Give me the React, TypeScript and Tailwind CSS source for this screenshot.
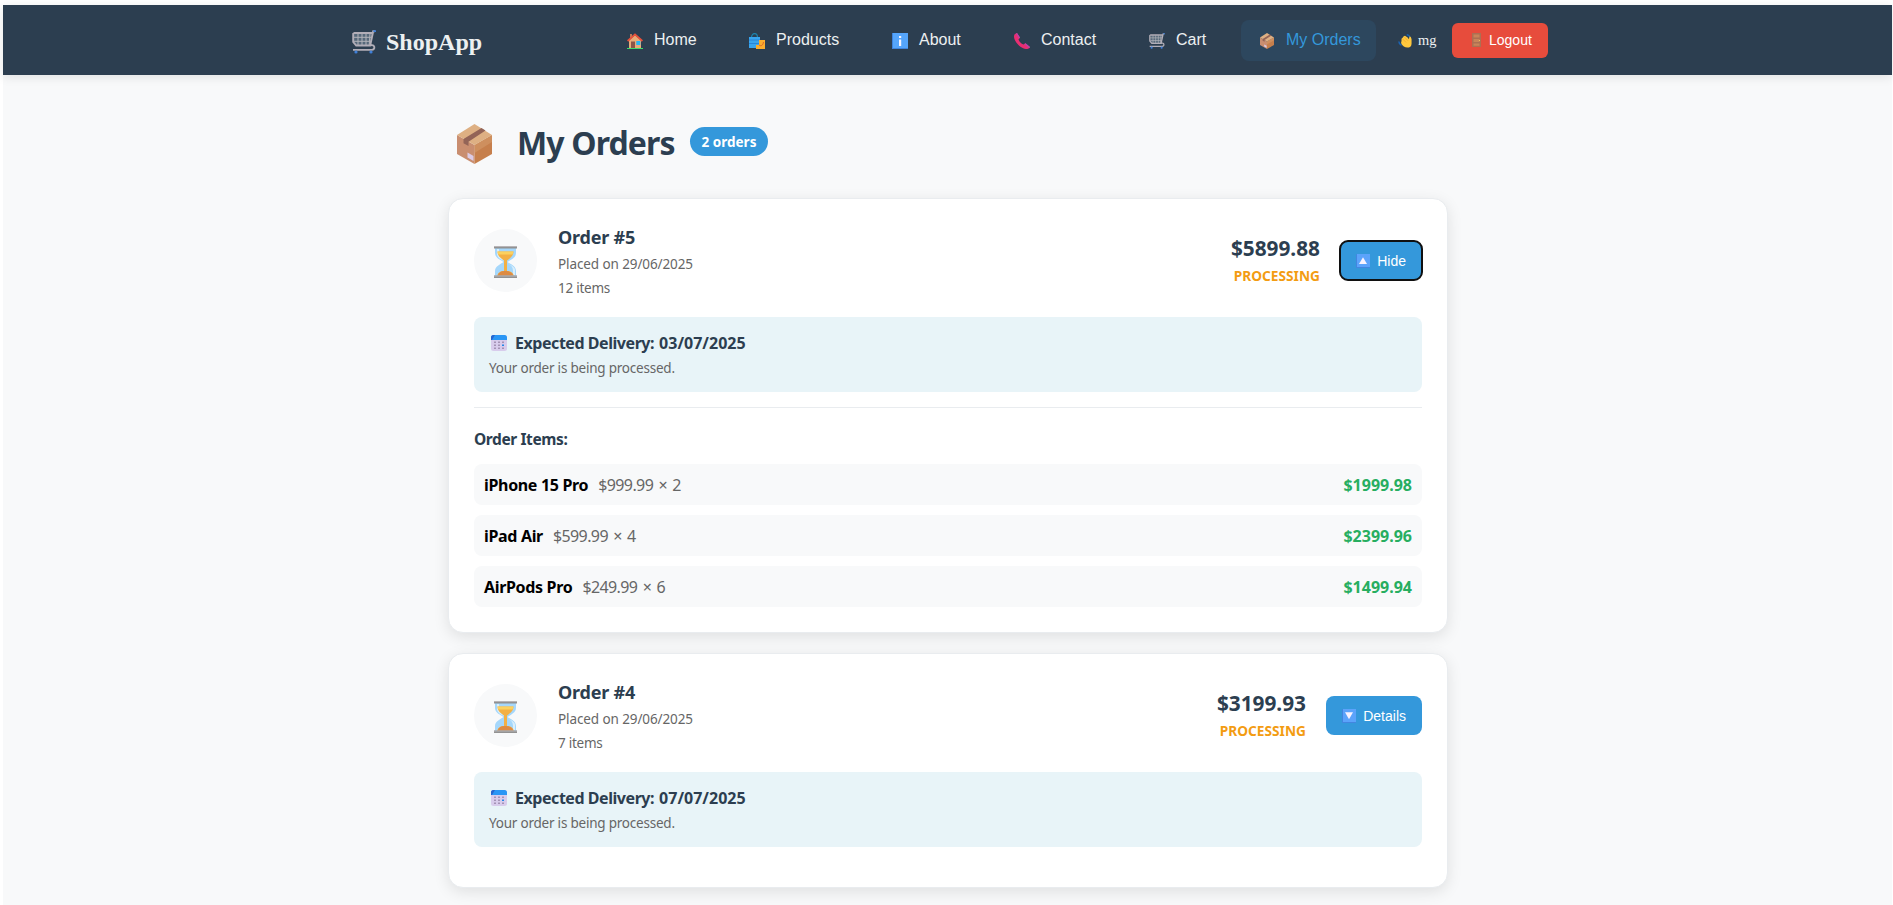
import React from "react";

type IconProps = { className?: string };

const Trolley = ({ className }: IconProps) => (
  <svg viewBox="0 0 24 24" className={className} fill="none">
    <path d="M2 3.5h18.2l-1.6 12H4L1.5 12z" fill="#56687a" />
    <path d="M6 3.5v12M10 3.5v12M14 3.5v12M18 3.5l-.8 12M1.5 7.3h18M2 11.3h17" stroke="#b2b3ba" strokeWidth="1" />
    <path d="M23 1.2h-1.8l-3 14.3H4.2L1.2 12V3.8L2.5 3h18.2M18.2 15.5c4.8-1.8 5.6 4.2 1.5 4.4H1" stroke="#b2aeb8" strokeWidth="1.9" />
    <path d="M21.3 1.1H24" stroke="#3f7fd8" strokeWidth="1.8" />
    <circle cx="4" cy="22" r="1.6" fill="#3f7fd8" />
    <circle cx="19" cy="22" r="1.6" fill="#3f7fd8" />
  </svg>
);

const House = ({ className }: IconProps) => (
  <svg viewBox="0 0 16 16" className={className}>
    <path d="M3 1h2v4H3z" fill="#b97a5c" />
    <path d="M2 7.5 8 2l6 5.5V15H2z" fill="#e8ab78" />
    <path d="M.6 8 8 1.3 15.4 8" fill="none" stroke="#e8503a" strokeWidth="1.7" />
    <path d="M4 8.5h4V15H4z" fill="#8c5548" />
    <path d="M9.3 8h4v4h-4z" fill="#28b4f0" />
    <path d="M0 15h16v1H0z" fill="#3ddc6c" />
  </svg>
);

const Bags = ({ className }: IconProps) => (
  <svg viewBox="0 0 16 16" className={className}>
    <path d="M2.5 4.5C2.5-.8 8.5-.8 8.5 4.5" fill="none" stroke="#1c83ad" strokeWidth="1.2" />
    <path d="M0 4h11v11H0z" fill="#39a5ee" />
    <path d="M0 7h11M0 10.5h11" stroke="#237bd0" strokeWidth=".8" />
    <path d="M10 7h6v9H7v-4h3z" fill="#fbad2d" />
    <path d="M10 12c2 1.5 4 .5 4.5-3" fill="none" stroke="#d9662b" />
  </svg>
);

const Info = ({ className }: IconProps) => (
  <svg viewBox="0 0 16 16" className={className}>
    <path d="M0 0h16v16H0z" fill="#3f83dc" />
    <path d="M1 0h15v15H1z" fill="#55a5fb" />
    <path d="M7 3h2.2v2H7zM7 6.5h2.2V13H7z" fill="#f6f4ff" />
  </svg>
);

const Phone = ({ className }: IconProps) => (
  <svg viewBox="0 0 16 16" className={className}>
    <path d="M1 1 3 0l3 4.5-1.5 2c1 2.5 2.5 4 5 5l2-1.3L16 14c-.5 1.5-2 2-4 2C6.5 15.5.5 9 0 4c0-1.5.2-2.5 1-3z" fill="#e92e72" />
    <path d="m2 .5 1-.5 3 4.5-1 1zM10.5 11l1-.8L16 14l-.8 1z" fill="#b444b0" />
  </svg>
);

const Parcel = ({ className }: IconProps) => (
  <svg viewBox="0 0 35 40" className={className}>
    <path d="M0 11 17.500 21v19L0 30z" fill="#c98e70" />
    <path d="M35 11 17.500 21v19L35 30z" fill="#c67f4c" />
    <path d="M35 11 17.500 21v8L35 18z" fill="#d29666" opacity=".7" />
    <path d="M17.500 0 35 11 17.500 21 0 11z" fill="#deb083" />
    <path d="m6.500 15 18-11 4 2.500-17 11.200V22l-5-2.800z" fill="#936457" />
    <path d="m10.500 28.500 6 3.500v5l-6-3.500z" fill="#dccbe5" />
  </svg>
);

const Wave = ({ className }: IconProps) => (
  <svg viewBox="0 0 16 16" className={className}>
    <path d="M10 .8c2 .2 3 1 3.500 2.700M1 8.500c0 2.500 1.500 3.500 3 4.500" fill="none" stroke="#1b65b5" strokeWidth="1.700" />
    <path d="M4 5.500 5.500 4l1-1.500L8 2l3 2 1.500 2 .5-3c1.500-.5 2 1 2.500 3v5c0 3-2 4.500-5 4.500-2.500 0-5.500-2-6.500-4L3.500 10 4 8z" fill="#ffc83d" />
    <path d="m5.300 5.700 4 4M7.500 3.800l4 4" stroke="#e99b31" strokeWidth=".7" />
  </svg>
);

const Door = ({ className }: IconProps) => (
  <svg viewBox="0 0 9 14" className={className}>
    <path d="M0 0h9v14H0z" fill="#ad6f52" />
    <path d="M1.5 1.5h6v3h-6zM1.5 6h6v3h-6zM1.5 10.5h6v2.3h-6z" fill="#c88459" />
    <path d="M7 7h1v1H7z" fill="#efc15a" />
  </svg>
);

const Hourglass = ({ className }: IconProps) => (
  <svg viewBox="0 0 23 32" className={className}>
    <path d="M1 2h21v5c0 5-6 7-8.500 9 2.500 2 8.500 4 8.500 9v5H1v-5c0-5 6-7 8.500-9C7 14 1 12 1 7z" fill="#a5d7fb" />
    <path d="M3 3h2v5c1 3 4 5 5 7-4-2-7-4-7-7zM13 17c4 2 6 4 6 8v4h2v-5c0-3-4-5-8-7z" fill="#d9effc" />
    <path d="M3.500 5.500h16c0 5-4 7-6.500 9V25c4 0 6 2 7 5H3c1-3 3-5 7-5V14.500c-2.500-2-6.500-4-6.500-9z" fill="#f3b044" />
    <path d="M3.500 5.500h16l-.8 3H4.300z" fill="#fbd15f" />
    <path d="M4 28.800c1-2.300 3-3.800 6.500-3.800h2c3 0 5.500 1.500 6.500 3.800V30H4z" fill="#dd8b43" />
    <path d="M0 0h23v2.500H0zM0 29.500h23V32H0z" fill="#929292" />
    <path d="M0 0h23v1H0zM0 29.500h23v1H0z" fill="#b7b5b8" />
  </svg>
);

const Calendar = ({ className }: IconProps) => (
  <svg viewBox="0 0 16 16" className={className}>
    <rect width="16" height="16" rx="2.500" fill="#d8ccec" />
    <path d="M0 5V2.500A2.500 2.500 0 0 1 2.500 0h11A2.500 2.500 0 0 1 16 2.500V5z" fill="#2996f5" />
    <path d="M0 5V2.500A2.500 2.500 0 0 1 2.500 0H4L1 5z" fill="#2765cf" />
    <path d="M3 6.500h2V8H3zM7 6.500h2V8H7zM11 6.500h2V8h-2zM3 9.500h2V11H3zM7 9.500h2V11H7zM3 12.500h2V14H3zM7 12.500h2V14H7zM11 12.500h2V14h-2z" fill="#a493b5" />
    <path d="M11 9.500h2V11h-2z" fill="#2187e8" />
  </svg>
);

const Toggle = ({ up }: { up: boolean }) => (
  <svg viewBox="0 0 14 14" className="size-3.5 shrink-0">
    <rect width="14" height="14" rx="1" fill="#4385df" />
    <path d="M1 0h13v13H1z" fill="#5ba3fb" />
    <path d={up ? "M7 3.3 11 10H3z" : "M3 3.3h8L7 10.3z"} fill="#f8f3ff" />
  </svg>
);

const links = [
  { label: "Home", icon: House, w: "w-[122px]" },
  { label: "Products", icon: Bags, w: "w-[143px]" },
  { label: "About", icon: Info, w: "w-[122px]" },
  { label: "Contact", icon: Phone, w: "w-[135px]" },
  { label: "Cart", icon: Trolley, w: "w-[92px]" },
];

type Order = {
  id: number;
  count: number;
  total: string;
  delivery: string;
  items?: { name: string; price: string; total: string }[];
};

const orders: Order[] = [
  {
    id: 5,
    count: 12,
    total: "$5899.88",
    delivery: "03/07/2025",
    items: [
      { name: "iPhone 15 Pro", price: "$999.99 × 2", total: "$1999.98" },
      { name: "iPad Air", price: "$599.99 × 4", total: "$2399.96" },
      { name: "AirPods Pro", price: "$249.99 × 6", total: "$1499.94" },
    ],
  },
  { id: 4, count: 7, total: "$3199.93", delivery: "07/07/2025" },
];

function OrderCard({ order }: { order: Order }) {
  const open = !!order.items;
  return (
    <article className="rounded-[15px] border border-[#e9ecef] bg-white p-[25px] shadow-[0_4px_15px_rgba(0,0,0,0.1)]">
      <div className="flex h-[73px] items-center justify-between">
        <div className="flex items-center gap-[21px]">
          <div className="flex size-[63px] items-center justify-center rounded-full bg-[#f8f9fa]">
            <Hourglass className="mt-[3px] h-8 w-[23px]" />
          </div>
          <div className="pt-[3px] text-[13.5px] leading-6 tracking-[-0.1px] text-[#666]">
            <h3 className="mb-px text-[18px] leading-[27px] font-bold tracking-[-0.2px] text-[#2c3e50]">Order #{order.id}</h3>
            <p>Placed on 29/06/2025</p>
            <p>
              <span className="tracking-[-0.25px]">{order.count} items</span>
            </p>
          </div>
        </div>
        <div className="flex items-center gap-5">
          <div className="text-right">
            <div className="text-[20.8px] leading-[30px] font-bold text-[#2c3e50]">{order.total}</div>
            <div className="mt-px text-[13.7px] leading-6 font-bold text-[#f39c12]">PROCESSING</div>
          </div>
          <button
            className={
              "flex h-[39px] items-center justify-end gap-[7px] rounded-lg bg-[#3498db] pr-4 font-['Liberation_Sans',sans-serif] text-[14px] text-white " +
              (open ? "w-[82px] outline-2 outline-offset-[-1px] outline-[#101010]" : "w-[96px]")
            }
          >
            <Toggle up={open} />
            <span className="pt-px">{open ? "Hide" : "Details"}</span>
          </button>
        </div>
      </div>
      <div className="mt-5 mb-[15px] h-[75px] rounded-lg bg-[#e8f4f8] px-[15px] pt-[15px]">
        <div className="flex h-[22px] items-center pl-0.5 text-[16px] font-bold text-[#2c3e50]">
          <Calendar className="size-4 shrink-0" />
          <span className="ml-2 tracking-[-0.45px]">Expected Delivery:</span>
          <span className="ml-[5px]">{order.delivery}</span>
        </div>
        <p className="mt-0.5 text-[13.5px] leading-6 tracking-[-0.22px] text-[#666]">Your order is being processed.</p>
      </div>
      {order.items && (
        <div className="border-t border-[#e9ecef] pt-[21px]">
          <h4 className="mb-3.5 text-[15.5px] leading-[21px] font-bold tracking-[-0.4px] text-[#2c3e50]">Order Items:</h4>
          <ul className="flex flex-col gap-2.5">
            {order.items.map((item) => (
              <li key={item.name} className="flex h-[41px] items-center rounded-lg bg-[#f8f9fa] px-2.5 pt-px text-[16px]">
                <span className="font-bold tracking-[-0.33px] text-black">{item.name}</span>
                <span className="ml-2.5 tracking-[-0.6px] text-[#666] [word-spacing:1.7px]">{item.price}</span>
                <span className="ml-auto font-bold text-[#27ae60]">{item.total}</span>
              </li>
            ))}
          </ul>
        </div>
      )}
    </article>
  );
}

export default function App() {
  return (
    <div className="h-[905px] overflow-hidden bg-white pt-[5px] pr-px pl-[3px] font-['Noto_Sans',sans-serif]">
      <div className="h-[900px] bg-[#f8f9fa]">
        <header className="relative flex h-[70px] items-center bg-[#2c3e50] pl-[349px] text-[#ecf0f1] shadow-[0_2px_10px_rgba(0,0,0,0.1)]">
          <div className="flex w-[275px] items-center gap-2.5 pt-[3px] font-['Liberation_Serif',serif] text-[24px] font-bold">
            <Trolley className="size-6" />
            <span>ShopApp</span>
          </div>
          <nav className="flex font-['Liberation_Sans',sans-serif] text-[16px]">
            {links.map((l) => (
              <a key={l.label} className={"flex h-[41px] items-center gap-[11px] " + l.w}>
                <l.icon className="mt-0.5 size-4 shrink-0" />
                <span>{l.label}</span>
              </a>
            ))}
          </nav>
          <a className="flex h-[41px] w-[135px] items-center gap-3 rounded-lg bg-[#2d475e] pl-[19px] font-['Liberation_Sans',sans-serif] text-[16px] text-[#3498db]">
            <Parcel className="mt-0.5 h-4 w-3.5" />
            <span>My Orders</span>
          </a>
          <div className="flex w-[76px] items-center gap-1.5 pt-0.5 pl-[22px] font-['Liberation_Serif',serif] text-[14.4px]">
            <Wave className="size-3.5 shrink-0" />
            <span>mg</span>
          </div>
          <button className="flex h-[35px] w-24 items-center gap-2 rounded-md bg-[#e74c3c] pl-5 font-['Liberation_Sans',sans-serif] text-[14px] text-white">
            <Door className="h-3.5 w-[9px]" />
            <span className="pt-px">Logout</span>
          </button>
        </header>
        <main className="ml-[445px] w-[1000px] pt-10">
          <div className="mb-[30px] flex h-[53px] items-center">
            <Parcel className="mt-[5px] ml-[9px] h-10 w-[35px]" />
            <h1 className="mt-0.5 ml-[25px] w-[158px] text-[32px] font-bold tracking-[-0.85px] whitespace-nowrap text-[#2c3e50]">My Orders</h1>
            <span className="ml-[15px] flex h-[29px] w-[78px] items-center justify-center rounded-full bg-[#3498db] pt-px text-[13.5px] font-bold text-white">2 orders</span>
          </div>
          <div className="flex flex-col gap-5">
            {orders.map((o) => (
              <OrderCard key={o.id} order={o} />
            ))}
          </div>
        </main>
      </div>
    </div>
  );
}
